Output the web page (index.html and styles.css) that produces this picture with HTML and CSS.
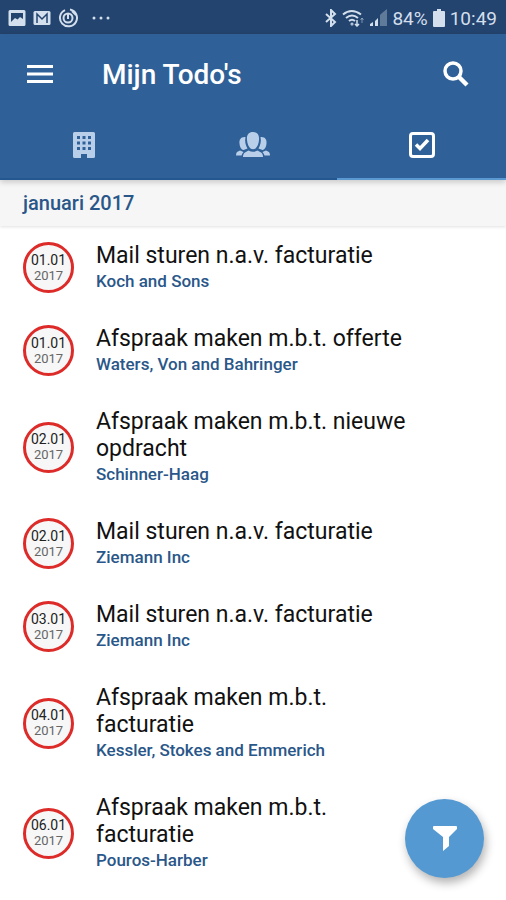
FILE: index.html
```html
<!DOCTYPE html>
<html lang="nl">
<head>
<meta charset="utf-8">
<meta name="viewport" content="width=device-width, initial-scale=1">
<title>Mijn Todo's</title>
<link rel="stylesheet" href="styles.css">
</head>
<body>
<div class="status">
  <div class="status-group">
    <svg width="18" height="18" viewBox="0 0 18 18"><path fill="currentColor" fill-rule="evenodd" d="M2 1h14a1.500 1.500 0 0 1 1.500 1.500v13A1.500 1.500 0 0 1 16 17H2A1.500 1.500 0 0 1 .5 15.500v-13A1.500 1.500 0 0 1 2 1zM3 4v9l4-4 2.500 1.500L12 8l3 2V4z"/></svg>
    <svg width="18" height="18" viewBox="0 0 18 18"><rect x=".5" y="2" width="17" height="14" rx="1.500" fill="currentColor"/><path d="M4 14V5l5 5 5-5v9" fill="none" stroke="#23446f" stroke-width="1.500"/></svg>
    <svg width="20" height="20" viewBox="0 0 20 20" fill="none" stroke="currentColor" stroke-width="2"><path d="M12 1.500a8.500 8.500 0 1 1-5 .6M14 3l4 4"/><circle cx="10" cy="10" r="4.500"/><path d="M10 5v6"/></svg>
    <svg class="more" width="20" height="18" viewBox="0 0 20 18" fill="currentColor"><circle cx="2" cy="9" r="1.500"/><circle cx="9" cy="9" r="1.500"/><circle cx="16" cy="9" r="1.500"/></svg>
  </div>
  <div class="status-group right">
    <svg width="12" height="18" viewBox="0 0 12 18" fill="none" stroke="currentColor" stroke-width="2"><path d="M1 5l9 8-4 4V1l4 4-9 8"/></svg>
    <svg width="23" height="18" viewBox="0 0 23 18" fill="none" stroke="currentColor" stroke-width="2"><path d="M1 5.500q8.500-7 18 0M4 9q6-5 12 0M7 12q3-2.500 6 0"/><path d="M15 11v6M13 15l2 2 2-2" stroke-width="1.500"/><path d="M20 14v-5M18.500 11l1.500-2 1.500 2" stroke-width="1" opacity=".5"/><circle cx="10" cy="15" r=".5"/></svg>
    <svg width="17" height="18" viewBox="0 0 17 18" fill="currentColor"><path d="M0 17v-2l3-2v4zM5 17v-5l3-3v8z"/><path opacity=".35" d="M10 17V6l2-2v13zM12 17V4l5-4v17z"/></svg>
    <span>84%</span>
    <svg width="12" height="18" viewBox="0 0 12 18" fill="currentColor"><path d="M4 0h4v2h3a1 1 0 0 1 1 1v14a1 1 0 0 1-1 1H1a1 1 0 0 1-1-1V3a1 1 0 0 1 1-1h3z"/></svg>
    <span>10:49</span>
  </div>
</div>
<header class="header">
  <div class="toolbar">
    <button class="icon-button" type="button" aria-label="Menu"><svg width="26" height="20" viewBox="0 0 26 20" stroke="currentColor" stroke-width="3"><path d="M0 2.500h26M0 10h26M0 17.500h26"/></svg></button>
    <h1>Mijn Todo's</h1>
    <button class="icon-button" type="button" aria-label="Zoeken"><svg width="26" height="26" viewBox="0 0 26 26" fill="none" stroke="currentColor"><circle cx="10" cy="10" r="8" stroke-width="3.500"/><path d="M16 16l8 8" stroke-width="4.500"/></svg></button>
  </div>
  <nav class="tabs">
    <a href="#bedrijven" aria-label="Bedrijven"><svg width="22" height="26" viewBox="0 0 22 26" fill="currentColor"><path fill-rule="evenodd" d="M1.500 0h19A1.500 1.500 0 0 1 22 1.500v23a1.500 1.500 0 0 1-1.500 1.500H14v-4H8v4H1.500A1.500 1.500 0 0 1 0 24.500v-23A1.500 1.500 0 0 1 1.500 0zM4 4v3h3V4zM9.500 4v3h3V4zM15 4v3h3V4zM4 9.500v3h3v-3zM9.500 9.500v3h3v-3zM15 9.500v3h3v-3zM4 15v3h3v-3zM9.500 15v3h3v-3zM15 15v3h3v-3z"/></svg></a>
    <a href="#contacten" aria-label="Contacten"><svg width="34" height="26" viewBox="0 0 34 26" fill="currentColor"><path d="M17 0c4.500 0 6.500 3 6 8-.3 4-1.800 7-3.500 8.500-1.500 1-3.500 1-5 0C12.800 15 11.300 12 11 8c-.5-5 1.500-8 6-8z"/><path d="M12.500 18.500q4.500 2.500 9 0l3.500 2c1.500 1 2 2.500 2 4.500H7c0-2 .5-3.500 2-4.500z"/><path d="M9.500 5C5 4.500 3 7.500 3.500 11.500c.2 3 1.500 6 4 6.500l4-1.500C9.700 13.500 8.500 9.500 9.500 5zM4 18.500L1 20Q0 21 0 23.500h5.500q.5-2 2-3.500z"/><path d="M24.500 5c4.500-.5 6.500 2.500 6 6.500-.2 3-1.500 6-4 6.500l-4-1.500c1.800-3 3-7 2-11.500zM30 18.500L33 20q1 1 1 3.500h-5.500q-.5-2-2-3.500z"/></svg></a>
    <a class="active" href="#todos" aria-label="Todo's" aria-current="page"><svg width="26" height="26" viewBox="0 0 26 26" fill="none" stroke="currentColor"><rect x="1.500" y="1.500" width="23" height="23" rx="2.500" stroke-width="3"/><path d="M7 12.500l4 4 8-8.500" stroke-width="3.500"/></svg></a>
  </nav>
</header>
<main>
  <h2 class="month">januari 2017</h2>
  <ul class="todos">
    <li><time class="date" datetime="2017-01-01"><b>01.01</b><span>2017</span></time><div class="text"><h3>Mail sturen n.a.v. facturatie</h3><p>Koch and Sons</p></div></li>
    <li><time class="date" datetime="2017-01-01"><b>01.01</b><span>2017</span></time><div class="text"><h3>Afspraak maken m.b.t. offerte</h3><p>Waters, Von and Bahringer</p></div></li>
    <li><time class="date" datetime="2017-01-02"><b>02.01</b><span>2017</span></time><div class="text"><h3>Afspraak maken m.b.t. nieuwe opdracht</h3><p>Schinner-Haag</p></div></li>
    <li><time class="date" datetime="2017-01-02"><b>02.01</b><span>2017</span></time><div class="text"><h3>Mail sturen n.a.v. facturatie</h3><p>Ziemann Inc</p></div></li>
    <li><time class="date" datetime="2017-01-03"><b>03.01</b><span>2017</span></time><div class="text"><h3>Mail sturen n.a.v. facturatie</h3><p>Ziemann Inc</p></div></li>
    <li><time class="date" datetime="2017-01-04"><b>04.01</b><span>2017</span></time><div class="text"><h3>Afspraak maken m.b.t. facturatie</h3><p>Kessler, Stokes and Emmerich</p></div></li>
    <li><time class="date" datetime="2017-01-06"><b>06.01</b><span>2017</span></time><div class="text"><h3>Afspraak maken m.b.t. facturatie</h3><p>Pouros-Harber</p></div></li>
  </ul>
</main>
<button class="fab" type="button" aria-label="Filter"><svg width="26" height="28" viewBox="0 0 26 28" fill="currentColor"><path d="M2 1h22q1 0 1 1v2l-8 8v9l-6 5V12L1 4V2q0-1 1-1z"/></svg></button>
</body>
</html>
```
FILE: styles.css
```css
* { box-sizing: border-box; }
body {
  margin: 0;
  background: #fff;
  font-family: Roboto, "Liberation Sans", sans-serif;
}
h1, h2, h3, p, ul { margin: 0; padding: 0; }
svg { display: block; flex: none; }
button { border: 0; padding: 0; background: none; color: inherit; }

.status {
  display: flex;
  justify-content: space-between;
  height: 34px;
  padding: 2px 9px 0 8px;
  background: #23446f;
  color: #d3dfec;
  font-size: 19px;
}
.status-group { display: flex; align-items: center; gap: 7px; }
.status-group.right { gap: 5px; }
.more { margin-left: 7px; }

.header {
  position: relative;
  background: #2f6198;
  color: #fff;
  box-shadow: 0 2px 6px rgba(0, 0, 0, .2);
}
.toolbar {
  display: flex;
  align-items: center;
  height: 80px;
  padding: 0 30px 0 20px;
}
.icon-button {
  display: flex;
  align-items: center;
  justify-content: center;
  width: 40px;
  height: 40px;
}
.toolbar h1 {
  flex: 1;
  padding: 2px 0 0 42px;
  font-size: 28px;
  line-height: 32px;
  font-weight: 500;
}
.tabs {
  display: grid;
  grid-template-columns: repeat(3, 1fr);
  height: 66px;
}
.tabs a {
  display: flex;
  justify-content: center;
  align-items: flex-start;
  padding-top: 18px;
  color: #b9cfe9;
  border-bottom: 2px solid #24568f;
}
.tabs .active { color: #fff; border-color: #5a99d2; }

.month {
  height: 46px;
  padding: 0 23px;
  background: #f6f6f6;
  color: #2a5789;
  font-size: 20px;
  line-height: 46px;
  font-weight: 500;
  box-shadow: 0 1px 3px rgba(0, 0, 0, .12);
}
.todos { list-style: none; }
.todos li {
  display: flex;
  align-items: center;
  padding: 16px 92px 16px 23px;
}
.date {
  display: flex;
  flex: none;
  flex-direction: column;
  align-items: center;
  justify-content: center;
  width: 51px;
  height: 51px;
  border: 3px solid #dc2b28;
  border-radius: 50%;
  background: #f7f7f7;
  color: #222;
  font-size: 14px;
  line-height: 15px;
}
.date b { font-weight: 400; }
.date span { color: #666; font-size: 13px; }
.text { padding-left: 22px; }
.text h3 {
  color: #111;
  font-size: 23px;
  line-height: 27px;
  font-weight: 400;
}
.text p {
  color: #2a5789;
  font-size: 17px;
  line-height: 24px;
  font-weight: 500;
}
.fab {
  position: fixed;
  right: 22px;
  bottom: 22px;
  display: flex;
  align-items: center;
  justify-content: center;
  width: 79px;
  height: 79px;
  border-radius: 50%;
  background: #5499d2;
  color: #fff;
  box-shadow: 2px 5px 10px rgba(0, 0, 0, .3);
}
```
